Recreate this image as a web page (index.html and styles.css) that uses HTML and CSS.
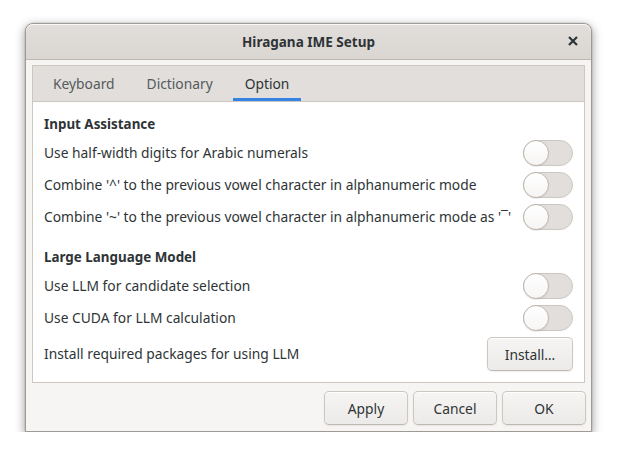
FILE: index.html
```html
<!DOCTYPE html>
<html>
<head>
<meta charset="utf-8">
<link rel="stylesheet" href="styles.css">
</head>
<body>
<div class="desktop">
  <div class="window">
    <div class="titlebar">
      <span class="title">Hiragana IME Setup</span>
      <span class="close">
        <svg width="12" height="12" viewBox="0 0 12 12"><path d="M2 2 L10 10 M10 2 L2 10" stroke="#2e3436" stroke-width="2.2" stroke-linecap="butt"/></svg>
      </span>
    </div>
    <div class="body">
      <div class="notebook">
        <div class="tabs">
          <div class="tab">Keyboard</div>
          <div class="tab">Dictionary</div>
          <div class="tab active">Option</div>
        </div>
        <div class="page">
          <div class="heading">Input Assistance</div>
          <div class="row"><span class="label">Use half-width digits for Arabic numerals</span><span class="switch"><span class="knob"></span></span></div>
          <div class="row"><span class="label">Combine '^' to the previous vowel character in alphanumeric mode</span><span class="switch"><span class="knob"></span></span></div>
          <div class="row"><span class="label">Combine '~' to the previous vowel character in alphanumeric mode as '&#x203E;'</span><span class="switch"><span class="knob"></span></span></div>
          <div class="heading second">Large Language Model</div>
          <div class="row"><span class="label">Use LLM for candidate selection</span><span class="switch"><span class="knob"></span></span></div>
          <div class="row"><span class="label">Use CUDA for LLM calculation</span><span class="switch"><span class="knob"></span></span></div>
          <div class="row btnrow"><span class="label">Install required packages for using LLM</span><span class="button install">Install…</span></div>
        </div>
      </div>
      <div class="actions">
        <span class="button action">Apply</span>
        <span class="button action">Cancel</span>
        <span class="button action">OK</span>
      </div>
    </div>
  </div>
</div>
</body>
</html>
```

FILE: styles.css
```css
html, body {
  margin: 0;
  padding: 0;
  background: #ffffff;
}
body {
  font-family: "Noto Sans", "DejaVu Sans", sans-serif;
  font-size: 13.8px;
  color: #2e3436;
}
.desktop {
  padding: 23px 26px 0 25px;
}
.window {
  width: 565px;
  height: 407px;
  border: 1px solid #9e9a96;
  border-radius: 8px 8px 0 0;
  background: #f6f5f4;
  box-shadow: 0 3px 10px 1px rgba(0,0,0,0.35), 0 0 0 1px rgba(0,0,0,0.05);
  display: flex;
  flex-direction: column;
  overflow: hidden;
}
.titlebar {
  height: 35px;
  flex: none;
  border-bottom: 1px solid #bfb8b1;
  background: linear-gradient(to bottom, #e1dedb, #dad6d2);
  border-radius: 7px 7px 0 0;
  display: flex;
  align-items: center;
  justify-content: center;
  position: relative;
  box-shadow: inset 0 1px rgba(255,255,255,0.8);
}
.title {
  font-weight: bold;
  font-size: 13.5px;
  color: #2e3436;
}
.close {
  position: absolute;
  right: 12px;
  top: 11px;
  width: 12px;
  height: 12px;
  display: flex;
}
.body {
  flex: 1;
  padding: 5px 6px 6px 6px;
  display: flex;
  flex-direction: column;
}
.notebook {
  border: 1px solid #cdc7c2;
  display: flex;
  flex-direction: column;
  height: 316px;
  flex: none;
}
.tabs {
  height: 36px;
  background: #e1dedb;
  border-bottom: 1px solid #cdc7c2;
  display: flex;
  gap: 8px;
  padding-left: 8px;
}
.tab {
  padding: 0 12px;
  display: flex;
  align-items: center;
  color: #555a5c;
  box-sizing: border-box;
  border-bottom: 3px solid transparent;
  padding-top: 2px;
}
.tab.active {
  color: #2e3436;
  border-bottom-color: #3584e4;
}
.page {
  flex: 1;
  background: #ffffff;
  padding: 12px 11px 11px 11px;
  display: flex;
  flex-direction: column;
  gap: 6px;
}
.heading {
  font-weight: bold;
  font-size: 13.4px;
  height: 20px;
  line-height: 21px;
}
.heading.second {
  margin-top: 11px;
}
.row {
  display: flex;
  align-items: center;
  justify-content: space-between;
  height: 26px;
}
.label {
  margin-top: -1px;
}
.row.btnrow {
  height: 34px;
}
.switch {
  width: 48px;
  height: 24px;
  border: 1px solid #cdc7c2;
  background: #e1dedb;
  border-radius: 14px;
  position: relative;
  flex: none;
}
.knob {
  position: absolute;
  left: -1px;
  top: -1px;
  width: 24px;
  height: 24px;
  border-radius: 50%;
  border: 1px solid #bfb8b1;
  background: linear-gradient(to bottom, #ffffff, #f6f5f4);
  box-shadow: 0 1px 1px rgba(0,0,0,0.08);
}
.button {
  box-sizing: border-box;
  border: 1px solid #cdc7c2;
  border-bottom-color: #bfb8b1;
  border-radius: 5px;
  background: linear-gradient(to top, #edebe9 2px, #f6f5f4);
  box-shadow: inset 0 1px rgba(255,255,255,0.8), 0 1px 2px rgba(0,0,0,0.07);
  display: flex;
  align-items: center;
  justify-content: center;
  color: #2e3436;
}
.install {
  width: 86px;
  height: 34px;
}
.actions {
  margin-top: 8px;
  margin-right: -1px;
  display: flex;
  justify-content: flex-end;
  gap: 5px;
}
.action {
  width: 84px;
  height: 34px;
}
```
